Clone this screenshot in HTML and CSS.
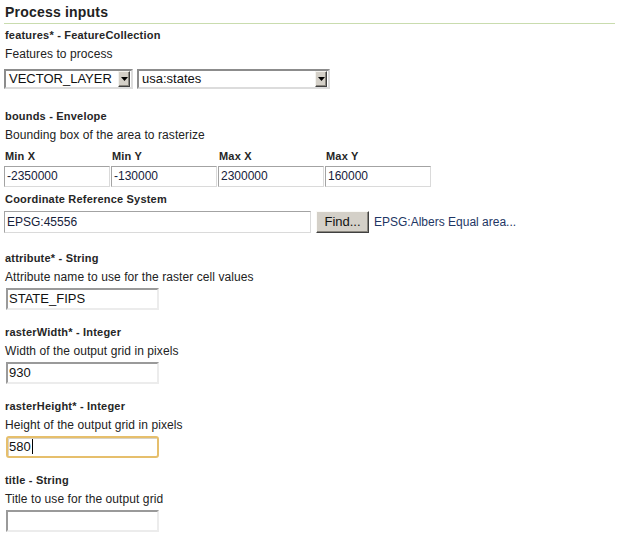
FILE: index.html
```html
<!DOCTYPE html>
<html>
<head>
<meta charset="utf-8">
<link rel="stylesheet" href="styles.css">
</head>
<body>
<div class="panel">
  <h2 class="title">Process inputs</h2>

  <div class="field first">
    <div class="label">features* - FeatureCollection</div>
    <div class="desc">Features to process</div>
    <div class="select-row">
      <div class="select sel-type"><span class="val">VECTOR_LAYER</span><span class="arrow"><svg width="7" height="4" viewBox="0 0 7 4"><path d="M0 0h7L3.5 4z" fill="#000"/></svg></span></div>
      <div class="select sel-layer"><span class="val">usa:states</span><span class="arrow"><svg width="7" height="4" viewBox="0 0 7 4"><path d="M0 0h7L3.5 4z" fill="#000"/></svg></span></div>
    </div>
  </div>

  <div class="field bounds">
    <div class="label">bounds - Envelope</div>
    <div class="desc">Bounding box of the area to rasterize</div>
    <div class="bbox">
      <div class="label head">Min X</div>
      <div class="label head">Min Y</div>
      <div class="label head">Max X</div>
      <div class="label head">Max Y</div>
      <div class="thin-input">-2350000</div>
      <div class="thin-input">-130000</div>
      <div class="thin-input">2300000</div>
      <div class="thin-input">160000</div>
    </div>
    <div class="label crs-label">Coordinate Reference System</div>
    <div class="crs-row">
      <div class="thin-input crs-input">EPSG:45556</div>
      <div class="button">Find...</div>
      <div class="crs-name">EPSG:Albers Equal area...</div>
    </div>
  </div>

  <div class="field attr">
    <div class="label">attribute* - String</div>
    <div class="desc">Attribute name to use for the raster cell values</div>
    <div class="input">STATE_FIPS</div>
  </div>

  <div class="field">
    <div class="label">rasterWidth* - Integer</div>
    <div class="desc">Width of the output grid in pixels</div>
    <div class="input">930</div>
  </div>

  <div class="field">
    <div class="label">rasterHeight* - Integer</div>
    <div class="desc">Height of the output grid in pixels</div>
    <div class="input focused">580<span class="caret"></span></div>
  </div>

  <div class="field">
    <div class="label">title - String</div>
    <div class="desc">Title to use for the output grid</div>
    <div class="input"></div>
  </div>
</div>
</body>
</html>
```

FILE: styles.css
```css
html, body {
  margin: 0;
  padding: 0;
  background: #ffffff;
}

body {
  font-family: "Liberation Sans", Arial, sans-serif;
  color: #222222;
}

.panel {
  padding: 0 4px;
}

.title {
  margin: 0;
  padding: 3px 0 2px 1px;
  font-size: 14px;
  line-height: 18px;
  font-weight: bold;
  letter-spacing: 0.2px;
  color: #222222;
  border-bottom: 1px solid #c9dcae;
}

.field {
  margin-top: 14px;
}

.field.first {
  margin-top: 3px;
}

.field.bounds {
  margin-top: 19px;
}

.field.attr {
  margin-top: 17px;
}

.label {
  padding-left: 1px;
  font-size: 11px;
  line-height: 16px;
  font-weight: bold;
  letter-spacing: 0.2px;
  color: #262626;
}

.desc {
  margin-top: 2px;
  padding-left: 1px;
  font-size: 12px;
  line-height: 18px;
  letter-spacing: 0.08px;
  color: #222222;
}

.select-row {
  display: flex;
  gap: 4px;
  margin-top: 6px;
}

.select {
  display: flex;
  align-items: stretch;
  box-sizing: border-box;
  height: 20px;
  border: 2px solid;
  border-color: #8c8c8c #dcdcdc #dcdcdc #8c8c8c;
  background: #ffffff;
}

.sel-type {
  width: 129px;
}

.sel-layer {
  width: 193px;
}

.select .val {
  flex: 1;
  padding-left: 3px;
  font-size: 13px;
  line-height: 16px;
  color: #111111;
  white-space: nowrap;
  overflow: hidden;
}

.select .arrow {
  display: flex;
  align-items: center;
  justify-content: center;
  box-sizing: border-box;
  width: 12px;
  margin-right: 1px;
  background: #d4d0c8;
  border: 1px solid;
  border-color: #f4f3ef #404040 #404040 #f4f3ef;
  box-shadow: inset -1px -1px 0 #8a877f;
}

.bbox {
  display: grid;
  grid-template-columns: repeat(4, 106px);
  column-gap: 1px;
  margin-top: 4px;
}

.bbox .head {
  margin-bottom: 2px;
}

.thin-input {
  box-sizing: border-box;
  height: 21px;
  padding-left: 2px;
  border: 1px solid;
  border-color: #a3a3a3 #dadada #dadada #a3a3a3;
  font-size: 12px;
  line-height: 19px;
  color: #16213a;
  white-space: nowrap;
}

.crs-label {
  margin-top: 4px;
}

.crs-row {
  display: flex;
  align-items: center;
  margin-top: 4px;
}

.crs-input {
  width: 307px;
  height: 22px;
  line-height: 20px;
}

.button {
  box-sizing: border-box;
  width: 53px;
  height: 22px;
  margin-left: 5px;
  background: #d4d0c8;
  border: 1px solid;
  border-color: #fbfaf7 #404040 #404040 #fbfaf7;
  box-shadow: inset -1px -1px 0 #8a877f;
  font-size: 13px;
  line-height: 19px;
  text-align: center;
  color: #111111;
}

.crs-name {
  margin-left: 5px;
  font-size: 12px;
  color: #1e3664;
}

.input {
  box-sizing: border-box;
  width: 153px;
  height: 22px;
  margin-top: 2px;
  margin-left: 2px;
  padding-left: 1px;
  border: 2px solid;
  border-color: #9a9a9a #ececec #ececec #9a9a9a;
  background: #ffffff;
  font-size: 13px;
  line-height: 18px;
  color: #111111;
  white-space: nowrap;
}

.input.focused {
  border-color: #e6bf6c;
  border-radius: 3px;
  box-shadow: inset 1px 1px 0 #d8d2c4;
}

.caret {
  display: inline-block;
  width: 1px;
  height: 15px;
  margin-left: 1px;
  vertical-align: -3px;
  background: #000000;
}
```
